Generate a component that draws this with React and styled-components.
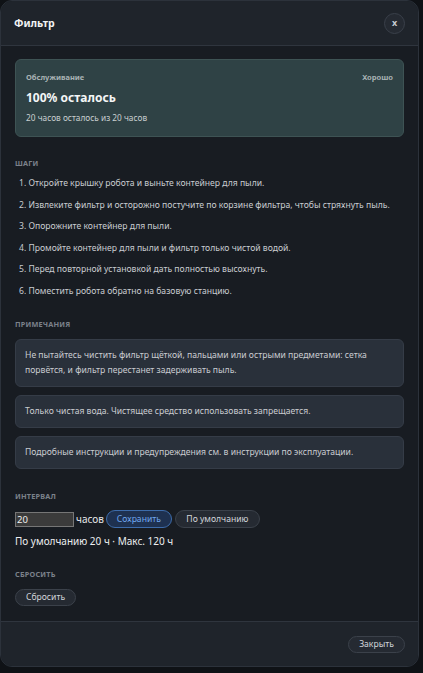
import React from "react";
import styled, { createGlobalStyle } from "styled-components";

const Global = createGlobalStyle`
  html, body { margin: 0; padding: 0; background: #0f1216; }
  body { font-family: "Noto Sans", "Open Sans", sans-serif; -webkit-font-smoothing: antialiased; }
  * { box-sizing: border-box; }
`;

const Modal = styled.div`
  width: 419px;
  height: 667px;
  display: flex;
  flex-direction: column;
  background: #181c22;
  border: 1px solid #2c323b;
  border-radius: 12px;
  overflow: hidden;
`;

const Header = styled.header`
  height: 45px;
  flex: none;
  display: flex;
  align-items: center;
  justify-content: space-between;
  padding: 0 13px;
  background: #1f242b;
  border-bottom: 1px solid #2f353e;
`;

const Title = styled.h2`
  margin: 0;
  font-size: 10.5px;
  font-weight: 700;
  color: #f2f3f5;
`;

const CloseCircle = styled.button`
  width: 21px;
  height: 21px;
  border-radius: 50%;
  border: 1px solid #3a404a;
  background: #252a32;
  color: #c8ccd2;
  font: 700 9px "Noto Sans", sans-serif;
  display: flex;
  align-items: center;
  justify-content: center;
  padding: 0 0 2px;
`;

const Body = styled.main`
  flex: 1;
  padding: 13px 14px 0;
  display: flex;
  flex-direction: column;
`;

const StatusCard = styled.section`
  height: 78px;
  padding: 11px 10px 0 10px;
  background: #2f4245;
  border: 1px solid #3e5354;
  border-radius: 6px;
  display: flex;
  flex-direction: column;
`;

const StatusTop = styled.div`
  display: flex;
  justify-content: space-between;
  font-size: 7.5px;
  font-weight: 700;
  line-height: 12px;
  color: #a9b2b4;
`;

const StatusValue = styled.div`
  margin-top: 6px;
  font-size: 12px;
  font-weight: 700;
  line-height: 18px;
  color: #f4f6f6;
`;

const StatusSub = styled.div`
  margin-top: 5px;
  font-size: 8.3px;
  line-height: 12px;
  color: #c7cecf;
`;

const Section = styled.section`
  margin-top: ${(p) => p.$gap}px;
  display: flex;
  flex-direction: column;
`;

const SectionLabel = styled.div`
  font-size: 7.3px;
  font-weight: 700;
  line-height: 12px;
  letter-spacing: 0.2px;
  text-transform: uppercase;
  color: #7b818a;
`;

const Steps = styled.ol`
  margin: 4px 0 0;
  padding: 0 0 0 4px;
  list-style: none;
`;

const Step = styled.li`
  font-size: 8.6px;
  line-height: 21.5px;
  color: #c9ccd1;
  white-space: nowrap;
`;

const Notes = styled.div`
  margin-top: 9px;
  display: flex;
  flex-direction: column;
  gap: 8px;
`;

const Note = styled.div`
  padding: 8px 9px;
  background: #29303a;
  border: 1px solid #353c47;
  border-radius: 6px;
  font-size: 8.6px;
  line-height: 15px;
  color: #c9ccd1;
`;

const IntervalRow = styled.div`
  margin-top: 8px;
  display: flex;
  align-items: center;
  gap: 2px;
  height: 18px;
`;

const HoursInput = styled.input`
  width: 59px;
  height: 15px;
  margin: 0;
  padding: 0 1px;
  background: #3b3b3b;
  border: 1px solid #767676;
  color: #f0f0f0;
  font: 9.5px "Noto Sans", sans-serif;
  outline: none;
`;

const Unit = styled.span`
  font-size: 10px;
  color: #e6e8eb;
`;

const Pill = styled.button`
  height: ${(p) => p.$h || 18}px;
  padding: 0;
  border-radius: 9px;
  border: 1px solid ${(p) => (p.$primary ? "#3d6cab" : "#3b414a")};
  background: ${(p) => (p.$primary ? "#1e3150" : "#252a32")};
  color: ${(p) => (p.$primary ? "#6fa6ee" : "#d2d5da")};
  font: 8.6px "Noto Sans", sans-serif;
  line-height: 1;
  white-space: nowrap;
  display: inline-flex;
  align-items: center;
  justify-content: center;
  width: ${(p) => p.$w}px;
  margin-left: ${(p) => p.$ml || 0}px;
  flex: none;
`;

const Hint = styled.div`
  margin-top: 5px;
  font-size: 10px;
  line-height: 16px;
  color: #eceef0;
`;

const ResetRow = styled.div`
  margin-top: 9px;
  display: flex;
`;

const Footer = styled.footer`
  height: 45px;
  flex: none;
  display: flex;
  align-items: center;
  justify-content: flex-end;
  padding: 0 13px;
  background: #1f242b;
  border-top: 1px solid #2f353e;
`;

const steps = [
  "1. Откройте крышку робота и выньте контейнер для пыли.",
  "2. Извлеките фильтр и осторожно постучите по корзине фильтра, чтобы стряхнуть пыль.",
  "3. Опорожните контейнер для пыли.",
  "4. Промойте контейнер для пыли и фильтр только чистой водой.",
  "5. Перед повторной установкой дать полностью высохнуть.",
  "6. Поместить робота обратно на базовую станцию.",
];

const notes = [
  "Не пытайтесь чистить фильтр щёткой, пальцами или острыми предметами: сетка порвётся, и фильтр перестанет задерживать пыль.",
  "Только чистая вода. Чистящее средство использовать запрещается.",
  "Подробные инструкции и предупреждения см. в инструкции по эксплуатации.",
];

export default function App() {
  return (
    <>
      <Global />
      <Modal>
        <Header>
          <Title>Фильтр</Title>
          <CloseCircle>x</CloseCircle>
        </Header>
        <Body>
          <StatusCard>
            <StatusTop>
              <span>Обслуживание</span>
              <span>Хорошо</span>
            </StatusTop>
            <StatusValue>100% осталось</StatusValue>
            <StatusSub>20 часов осталось из 20 часов</StatusSub>
          </StatusCard>

          <Section $gap={20}>
            <SectionLabel>Шаги</SectionLabel>
            <Steps>
              {steps.map((s) => (
                <Step key={s}>{s}</Step>
              ))}
            </Steps>
          </Section>

          <Section $gap={16}>
            <SectionLabel>Примечания</SectionLabel>
            <Notes>
              {notes.map((n) => (
                <Note key={n}>{n}</Note>
              ))}
            </Notes>
          </Section>

          <Section $gap={21}>
            <SectionLabel>Интервал</SectionLabel>
            <IntervalRow>
              <HoursInput defaultValue="20" />
              <Unit>часов</Unit>
              <Pill $primary $w={66}>Сохранить</Pill>
              <Pill $w={85} $ml={1}>По умолчанию</Pill>
            </IntervalRow>
            <Hint>По умолчанию 20 ч · Макс. 120 ч</Hint>
          </Section>

          <Section $gap={19}>
            <SectionLabel>Сбросить</SectionLabel>
            <ResetRow>
              <Pill $w={61} $h={17}>Сбросить</Pill>
            </ResetRow>
          </Section>
        </Body>
        <Footer>
          <Pill $w={57} $h={17}>Закрыть</Pill>
        </Footer>
      </Modal>
    </>
  );
}
